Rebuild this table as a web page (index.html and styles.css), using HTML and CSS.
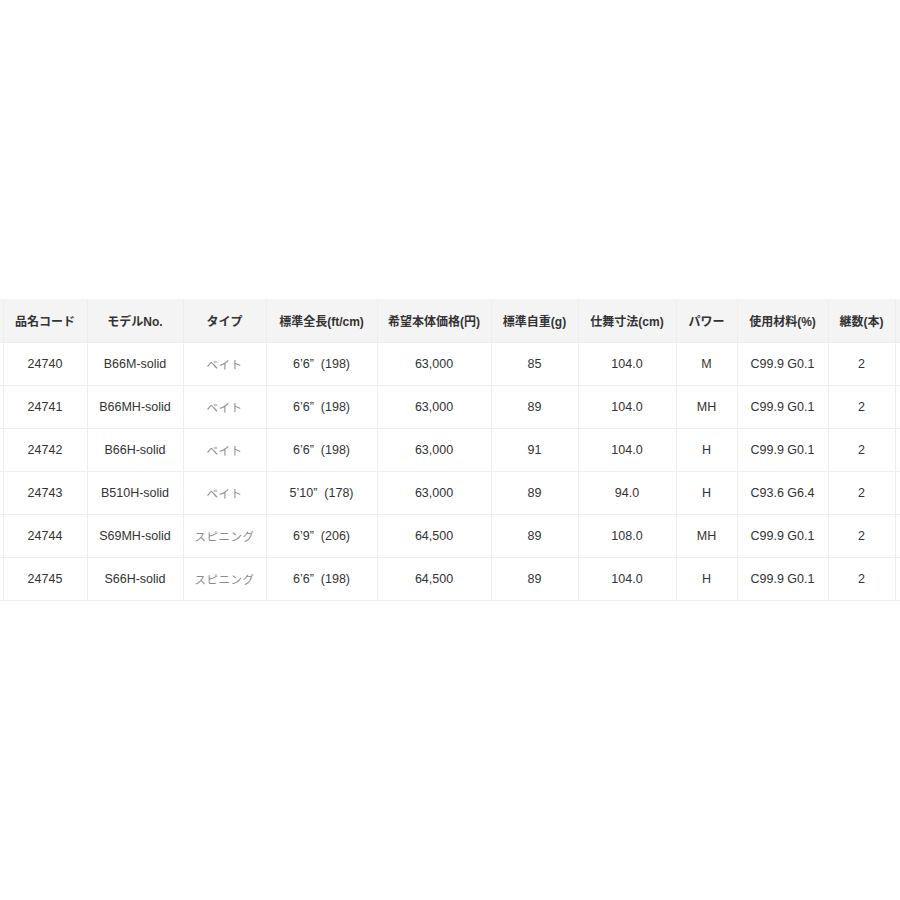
FILE: index.html
```html
<!DOCTYPE html>
<html lang="ja">
<head>
<meta charset="utf-8">
<title>スペック</title>
<link rel="stylesheet" href="styles.css">
</head>
<body>
<div class="wrap">
<table class="spec">
<colgroup>
<col class="c0"><col class="c1"><col class="c2"><col class="c3"><col class="c4"><col class="c5"><col class="c6"><col class="c7"><col class="c8"><col class="c9"><col class="c10"><col class="c11">
</colgroup>
<thead>
<tr><th class="edge"></th><th>品名コード</th><th>モデルNo.</th><th>タイプ</th><th>標準全長(ft/cm)</th><th>希望本体価格(円)</th><th>標準自重(g)</th><th>仕舞寸法(cm)</th><th>パワー</th><th>使用材料(%)</th><th>継数(本)</th><th class="edge"></th></tr>
</thead>
<tbody>
<tr><td class="edge"></td><td>24740</td><td>B66M-solid</td><td class="type">ベイト</td><td>6’6<span class="q">”</span>(198)</td><td>63,000</td><td>85</td><td>104.0</td><td>M</td><td>C99.9 G0.1</td><td>2</td><td class="edge"></td></tr>
<tr><td class="edge"></td><td>24741</td><td>B66MH-solid</td><td class="type">ベイト</td><td>6’6<span class="q">”</span>(198)</td><td>63,000</td><td>89</td><td>104.0</td><td>MH</td><td>C99.9 G0.1</td><td>2</td><td class="edge"></td></tr>
<tr><td class="edge"></td><td>24742</td><td>B66H-solid</td><td class="type">ベイト</td><td>6’6<span class="q">”</span>(198)</td><td>63,000</td><td>91</td><td>104.0</td><td>H</td><td>C99.9 G0.1</td><td>2</td><td class="edge"></td></tr>
<tr><td class="edge"></td><td>24743</td><td>B510H-solid</td><td class="type">ベイト</td><td>5’10<span class="q">”</span>(178)</td><td>63,000</td><td>89</td><td>94.0</td><td>H</td><td>C93.6 G6.4</td><td>2</td><td class="edge"></td></tr>
<tr><td class="edge"></td><td>24744</td><td>S69MH-solid</td><td class="type">スピニング</td><td>6’9<span class="q">”</span>(206)</td><td>64,500</td><td>89</td><td>108.0</td><td>MH</td><td>C99.9 G0.1</td><td>2</td><td class="edge"></td></tr>
<tr><td class="edge"></td><td>24745</td><td>S66H-solid</td><td class="type">スピニング</td><td>6’6<span class="q">”</span>(198)</td><td>64,500</td><td>89</td><td>104.0</td><td>H</td><td>C99.9 G0.1</td><td>2</td><td class="edge"></td></tr>
</tbody>
</table>
</div>
</body>
</html>
```

FILE: styles.css
```css
html, body {
  margin: 0;
  padding: 0;
  background: #ffffff;
}
body {
  font-family: "Liberation Sans", "Noto Sans CJK JP", sans-serif;
  color: #333333;
}
.wrap {
  width: 900px;
  overflow: hidden;
  padding-top: 299px;
}
.spec {
  border-collapse: collapse;
  table-layout: fixed;
  width: 960px;
  font-size: 12.5px;
}
.c0 { width: 3px; }
.c1 { width: 84px; }
.c2 { width: 96px; }
.c3 { width: 83px; }
.c4 { width: 111px; }
.c5 { width: 114px; }
.c6 { width: 87px; }
.c7 { width: 98px; }
.c8 { width: 61px; }
.c9 { width: 91px; }
.c10 { width: 67px; }
.c11 { width: 65px; }
.spec th,
.spec td {
  border: 1px solid #eeeeee;
  text-align: center;
  white-space: nowrap;
  padding: 0;
  height: 42px;
}
.spec thead th {
  background: #f4f4f4;
  font-weight: bold;
  font-size: 12px;
  color: #333333;
  border-top: none;
  height: 43px;
}
.spec th.edge,
.spec td.edge {
  border-left: none;
}
.spec td.type {
  color: #8a8a8a;
  font-size: 11.5px;
  letter-spacing: 0.5px;
}
.q {
  margin-right: 7px;
}
```
